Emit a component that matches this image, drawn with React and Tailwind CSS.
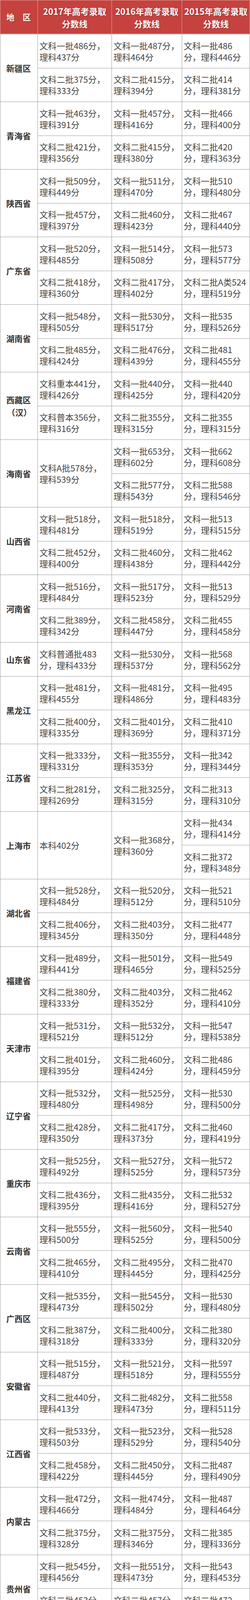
import React from "react";

const std = (name, r1, r2) => ({ name: Array.isArray(name) ? name : [name], n: 2, rows: [r1, r2] });

const provinces = [
  std("新疆区", [486, 437, 487, 464, 486, 446], [375, 333, 415, 394, 414, 381]),
  std("青海省", [463, 391, 457, 416, 466, 400], [421, 356, 415, 380, 420, 363]),
  std("陕西省", [509, 449, 511, 470, 510, 480], ["一批457", 397, 460, 423, 467, 440]),
  std("广东省", [520, 485, 514, 508, 573, 577], [418, 360, 417, 402, "二批A类524", 519]),
  std("湖南省", [548, 505, 530, 517, 535, 526], [485, 424, 476, 439, 481, 455]),
  std(["西藏区", "（汉）"], ["重本441", 426, 440, 425, 440, 420], ["普本356", 316, 355, 315, 355, 315]),
  {
    name: ["海南省"],
    n: 2,
    cols: [
      "文科A批578分，|理科539分",
      ["文科一批653分，|理科602分", "文科二批577分，|理科543分"],
      ["文科一批662|分，理科608分", "文科二批588|分，理科546分"],
    ],
  },
  std("山西省", [518, 481, 518, 519, 513, 515], [452, 400, 460, 438, 462, 442]),
  std("河南省", [516, 484, 517, 523, 513, 529], [389, 342, 458, 447, 455, 458]),
  {
    name: ["山东省"],
    n: 1,
    cols: ["文科普通批483|分，理科433分", "文科一批530分，|理科537分", "文科一批568|分，理科562分"],
  },
  std("黑龙江", [481, 455, 481, 486, 495, 483], [400, 335, 401, 369, 410, 371]),
  std("江苏省", [333, 331, 355, 353, 342, 344], [281, 269, 325, 315, 313, 310]),
  {
    name: ["上海市"],
    n: 2,
    cols: ["本科402分", "文科一批368分，|理科360分", ["文科一批434|分，理科414分", "文科二批372|分，理科348分"]],
  },
  std("湖北省", [528, 484, 520, 512, 521, 510], [406, 345, 403, 350, 477, 448]),
  std("福建省", [489, 441, 501, 465, 549, 525], [380, 333, 403, 352, 462, 410]),
  std("天津市", [531, 521, 532, 512, 547, 538], [401, 395, 460, 424, 486, 459]),
  std("辽宁省", [532, 480, 525, 498, 530, 500], [428, 350, 417, 373, 460, 419]),
  std("重庆市", [525, 492, 527, 525, 572, 573], [436, 395, 435, 416, 532, 527]),
  std("云南省", [555, 500, 560, 525, 540, 500], [465, 410, 495, 445, 470, 425]),
  std("广西区", [535, 473, 545, 502, 530, 480], [387, 318, 400, 333, 380, 320]),
  std("安徽省", [515, 487, 521, 518, 597, 555], [440, 413, 482, 473, 558, 511]),
  std("江西省", [533, 503, 523, 529, 528, 540], [458, 422, 450, 445, 487, 490]),
  std("内蒙古", [472, 466, 474, 484, 487, 464], [375, 328, 375, 346, 385, 336]),
  std("贵州省", [545, 456, 551, 473, 543, 453], [453, 361, 457, 365, 472, 372]),
  std("北京市", [555, 537, 583, 548, 579, 548], [468, 439, 532, 494, 527, 495]),
  std("宁夏区", [519, 439, 516, 465, 507, 445], [487, 408, 486, 434, 478, 416]),
  std("河北省", [517, 485, 535, 525, 548, 544], [395, 326, 416, 364, 496, 474]),
  std("四川省", [537, 511, 540, 532, 543, 528], [470, 436, 480, 453, 473, 445]),
  std("甘肃省", [505, 460, 504, 490, 517, 475], [458, 408, 455, 435, 465, 417]),
  {
    name: ["浙江省"],
    n: 1,
    cols: ["一段577分，二段|480分，三段359|分", "文科一批603分，|理科600分", "文科一批626|分，理科605分"],
  },
  std("吉林省", [528, 507, 531, 530, 543, 525], [412, 379, 413, 402, 433, 405]),
];

function label(v, i) {
  return typeof v === "string" ? "文科" + v : "文科" + (i === 0 ? "一批" : "二批") + v;
}

function normalize(p) {
  if (p.cols) return p;
  const c17 = p.rows.map((r, i) => `${label(r[0], i)}分，|理科${r[1]}分`);
  const c16 = p.rows.map((r, i) => `${label(r[2], i)}分，|理科${r[3]}分`);
  const c15 = p.rows.map((r, i) => `${label(r[4], i)}|分，理科${r[5]}分`);
  return { name: p.name, n: p.n, cols: [c17, c16, c15] };
}

const colW = ["w-[189px]", "w-[179px]", "w-[173px]"];

function Cell({ text, tall }) {
  return (
    <div
      className={
        "flex w-full flex-col justify-center overflow-visible bg-white pl-[4px] text-[22px] leading-[29px] whitespace-nowrap text-[#454545] " +
        (tall ? "h-full" : "h-[85.5px]")
      }
    >
      {text.split("|").map((l, i) => (
        <div key={i} className="h-[29px]">
          {l}
        </div>
      ))}
    </div>
  );
}

function Province({ p }) {
  const two = p.n === 2;
  return (
    <div className={"flex shrink-0 gap-px " + (two ? "h-[172px]" : "h-[85.5px]")}>
      <div className="flex h-full w-[95px] shrink-0 flex-col items-start justify-center bg-white pl-[15px] text-[21px] leading-[32px] font-bold text-[#333]">
        {p.name.map((l, i) => (
          <div key={i} className={i > 0 ? "pl-[2px]" : ""}>
            {l}
          </div>
        ))}
      </div>
      {p.cols.map((c, ci) => (
        <div key={ci} className={"flex h-full shrink-0 flex-col gap-px " + colW[ci]}>
          {typeof c === "string" ? (
            <Cell text={c} tall />
          ) : (
            c.map((t, ti) => <Cell key={ti} text={t} />)
          )}
        </div>
      ))}
    </div>
  );
}

export default function App() {
  const list = provinces.map(normalize);
  return (
    <div className="w-[641px] bg-white font-['Noto_Sans_CJK_SC','Noto_Sans',sans-serif]">
      <div className="flex h-[87px] gap-px bg-[#e2a3a1] p-px">
        <div className="flex w-[95px] shrink-0 items-center bg-[#c5423f] pl-[15px] text-[21px] font-bold text-white [text-shadow:1px_1px_2px_rgba(0,0,0,0.35)]">
          地　区
        </div>
        {["2017", "2016", "2015"].map((y, i) => (
          <div
            key={y}
            className={
              "flex shrink-0 flex-col items-center justify-center overflow-hidden bg-[#c5423f] text-[22px] leading-[32px] font-bold whitespace-nowrap text-white [text-shadow:1px_1px_2px_rgba(0,0,0,0.35)] " +
              colW[i]
            }
          >
            <div>{y}年高考录取</div>
            <div>分数线</div>
          </div>
        ))}
      </div>
      <div className="flex flex-col gap-px bg-[#9c9c9c] p-px">
        {list.map((p, i) => (
          <Province key={i} p={p} />
        ))}
      </div>
    </div>
  );
}
